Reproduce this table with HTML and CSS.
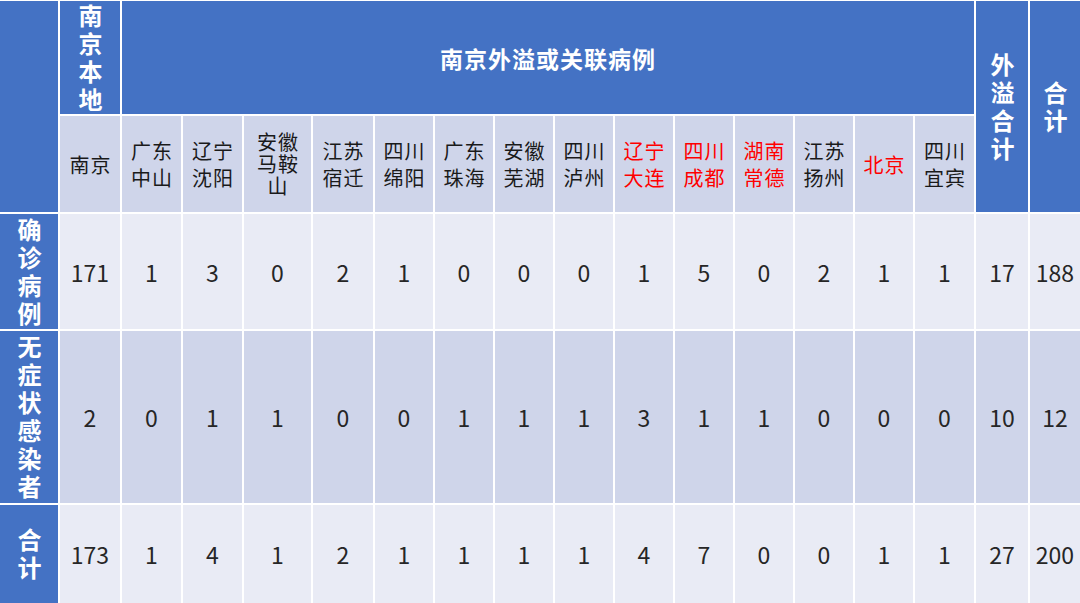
FILE: index.html
```html
<!DOCTYPE html>
<html lang="zh-CN">
<head>
<meta charset="utf-8">
<title>南京外溢或关联病例</title>
<link rel="stylesheet" href="styles.css">
</head>
<body>
<div class="table">
  <div class="cell hd corner"></div>
  <div class="cell hd local"><span class="vt">南京本地</span></div>
  <div class="cell hd title">南京外溢或关联病例</div>
  <div class="cell hd sum1"><span class="vt">外溢合计</span></div>
  <div class="cell hd sum2"><span class="vt">合计</span></div>

  <div class="cell sub">南京</div>
  <div class="cell sub">广东<br>中山</div>
  <div class="cell sub">辽宁<br>沈阳</div>
  <div class="cell sub three">安徽<br>马鞍<br>山</div>
  <div class="cell sub">江苏<br>宿迁</div>
  <div class="cell sub">四川<br>绵阳</div>
  <div class="cell sub">广东<br>珠海</div>
  <div class="cell sub">安徽<br>芜湖</div>
  <div class="cell sub">四川<br>泸州</div>
  <div class="cell sub red">辽宁<br>大连</div>
  <div class="cell sub red">四川<br>成都</div>
  <div class="cell sub red">湖南<br>常德</div>
  <div class="cell sub">江苏<br>扬州</div>
  <div class="cell sub red">北京</div>
  <div class="cell sub">四川<br>宜宾</div>

  <div class="cell rh"><span class="vt">确诊病例</span></div>
  <div class="cell n lt">171</div><div class="cell n lt">1</div><div class="cell n lt">3</div><div class="cell n lt">0</div><div class="cell n lt">2</div><div class="cell n lt">1</div><div class="cell n lt">0</div><div class="cell n lt">0</div><div class="cell n lt">0</div><div class="cell n lt">1</div><div class="cell n lt">5</div><div class="cell n lt">0</div><div class="cell n lt">2</div><div class="cell n lt">1</div><div class="cell n lt">1</div><div class="cell n lt">17</div><div class="cell n lt">188</div>

  <div class="cell rh"><span class="vt">无症状感染者</span></div>
  <div class="cell n dk">2</div><div class="cell n dk">0</div><div class="cell n dk">1</div><div class="cell n dk">1</div><div class="cell n dk">0</div><div class="cell n dk">0</div><div class="cell n dk">1</div><div class="cell n dk">1</div><div class="cell n dk">1</div><div class="cell n dk">3</div><div class="cell n dk">1</div><div class="cell n dk">1</div><div class="cell n dk">0</div><div class="cell n dk">0</div><div class="cell n dk">0</div><div class="cell n dk">10</div><div class="cell n dk">12</div>

  <div class="cell rh"><span class="vt">合计</span></div>
  <div class="cell n lt">173</div><div class="cell n lt">1</div><div class="cell n lt">4</div><div class="cell n lt">1</div><div class="cell n lt">2</div><div class="cell n lt">1</div><div class="cell n lt">1</div><div class="cell n lt">1</div><div class="cell n lt">1</div><div class="cell n lt">4</div><div class="cell n lt">7</div><div class="cell n lt">0</div><div class="cell n lt">0</div><div class="cell n lt">1</div><div class="cell n lt">1</div><div class="cell n lt">27</div><div class="cell n lt">200</div>
</div>
</body>
</html>
```

FILE: styles.css
```css
html, body {
  margin: 0;
  padding: 0;
  background: #ffffff;
  width: 1080px;
  height: 603px;
  overflow: hidden;
}

.table {
  display: grid;
  grid-template-columns: 58px 60px 59px 59px 67px 60px 58px 58px 58px 58px 58px 58px 58px 58px 58px 59px 52px 50px;
  grid-template-rows: 113px 96px 115px 172px 98px;
  gap: 2px;
  padding-top: 1px;
  background: #ffffff;
  width: 1080px;
  height: 603px;
  box-sizing: border-box;
  font-family: "Noto Sans CJK SC", "Noto Sans", sans-serif;
}

.cell {
  display: flex;
  align-items: center;
  justify-content: center;
  text-align: center;
  min-width: 0;
  min-height: 0;
}

.hd {
  background: #4472c4;
  color: #ffffff;
  font-weight: 700;
}

.corner {
  grid-column: 1;
  grid-row: 1 / 3;
}

.local {
  grid-column: 2;
  grid-row: 1;
}

.title {
  grid-column: 3 / 17;
  grid-row: 1;
  font-size: 23px;
  letter-spacing: 1px;
}

.sum1 {
  grid-column: 17;
  grid-row: 1 / 3;
}

.sum2 {
  grid-column: 18;
  grid-row: 1 / 3;
}

.vt {
  display: block;
  flex: none;
  writing-mode: vertical-rl;
  text-orientation: upright;
  white-space: nowrap;
  font-size: 24px;
  line-height: 28px;
  letter-spacing: 4px;
  padding-top: 4px;
  font-weight: 700;
  color: #ffffff;
}

.sub {
  background: #cfd5ea;
  color: #1a1a1a;
  font-size: 20px;
  line-height: 27px;
  letter-spacing: 1px;
  padding-left: 1px;
}

.sub.three {
  line-height: 22px;
}

.red {
  color: #ff0000;
}

.rh {
  background: #4472c4;
}

.n {
  color: #262626;
  font-size: 23px;
}

.lt {
  background: #e9ebf5;
}

.dk {
  background: #cfd5ea;
}
```
